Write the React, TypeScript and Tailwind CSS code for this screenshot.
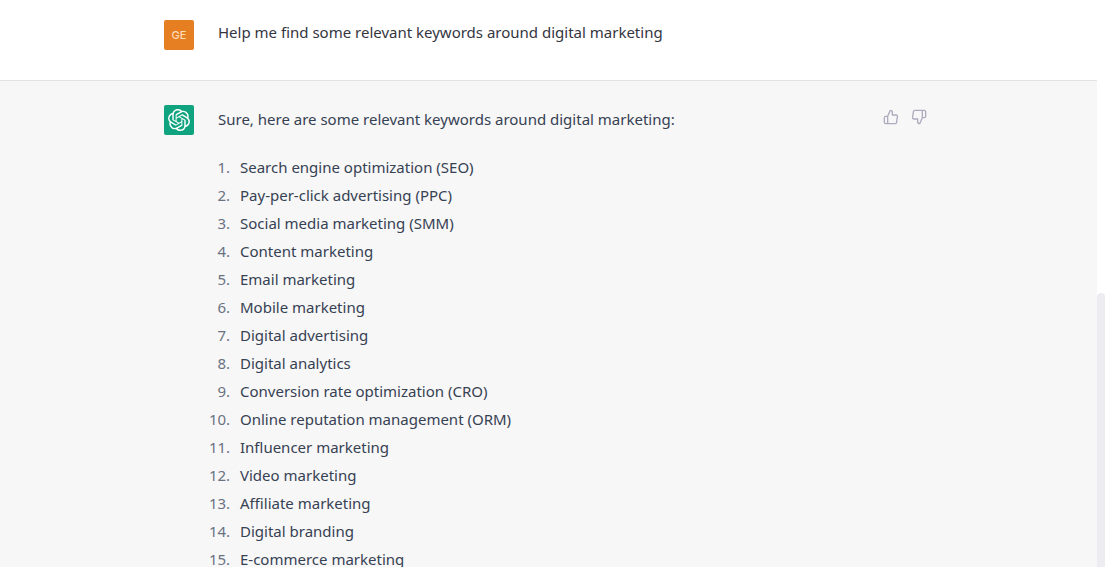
import type { ReactNode } from "react";
import { SiOpenai } from "react-icons/si";
import { FiThumbsDown, FiThumbsUp } from "react-icons/fi";

const keywords = [
  "Search engine optimization (SEO)",
  "Pay-per-click advertising (PPC)",
  "Social media marketing (SMM)",
  "Content marketing",
  "Email marketing",
  "Mobile marketing",
  "Digital advertising",
  "Digital analytics",
  "Conversion rate optimization (CRO)",
  "Online reputation management (ORM)",
  "Influencer marketing",
  "Video marketing",
  "Affiliate marketing",
  "Digital branding",
  "E-commerce marketing",
];

function Avatar({ className, children }: { className: string; children: ReactNode }) {
  return (
    <div
      className={`flex size-[30px] shrink-0 items-center justify-center rounded-xs text-white ${className}`}
    >
      {children}
    </div>
  );
}

function FeedbackButton({ label, children }: { label: string; children: ReactNode }) {
  return (
    <button type="button" aria-label={label} className="rounded-md p-1 text-[#acacbe]">
      {children}
    </button>
  );
}

function UserMessage() {
  return (
    <section className="border-b border-[#e3e3e3] bg-white text-[#343541]">
      <div className="mx-auto flex max-w-[769px] gap-6 pt-5 pr-0.5 pb-[30px]">
        <Avatar className="bg-[#e67e22]">
          <span className="font-['Inter',sans-serif] text-[11px] font-medium text-[#fbdcb8]">GE</span>
        </Avatar>
        <p className="leading-6">Help me find some relevant keywords around digital marketing</p>
      </div>
    </section>
  );
}

function AssistantMessage() {
  return (
    <section className="grow bg-[#f7f7f7] text-gray-700">
      <div className="mx-auto flex max-w-[769px] gap-6 py-6 pr-0.5">
        <Avatar className="bg-[#10a37f]">
          <SiOpenai size={22} />
        </Avatar>
        <div className="grow leading-7">
          <p>Sure, here are some relevant keywords around digital marketing:</p>
          <ol className="mt-5 ml-4 list-decimal marker:text-gray-500">
            {keywords.map((keyword) => (
              <li key={keyword} className="pl-1.5">
                {keyword}
              </li>
            ))}
          </ol>
        </div>
        <div className="flex shrink-0 items-start gap-1 self-start">
          <FeedbackButton label="Good response">
            <FiThumbsUp size={16} />
          </FeedbackButton>
          <FeedbackButton label="Bad response">
            <FiThumbsDown size={16} />
          </FeedbackButton>
        </div>
      </div>
    </section>
  );
}

export default function App() {
  return (
    <div className="flex h-screen overflow-hidden bg-white font-['Noto_Sans',sans-serif] text-[15px]">
      <main className="flex grow flex-col">
        <UserMessage />
        <AssistantMessage />
      </main>
      <div className="flex w-2 shrink-0 flex-col justify-end" aria-hidden="true">
        <div className="h-[274px] rounded-t-full bg-[#ececf1]" />
      </div>
    </div>
  );
}
